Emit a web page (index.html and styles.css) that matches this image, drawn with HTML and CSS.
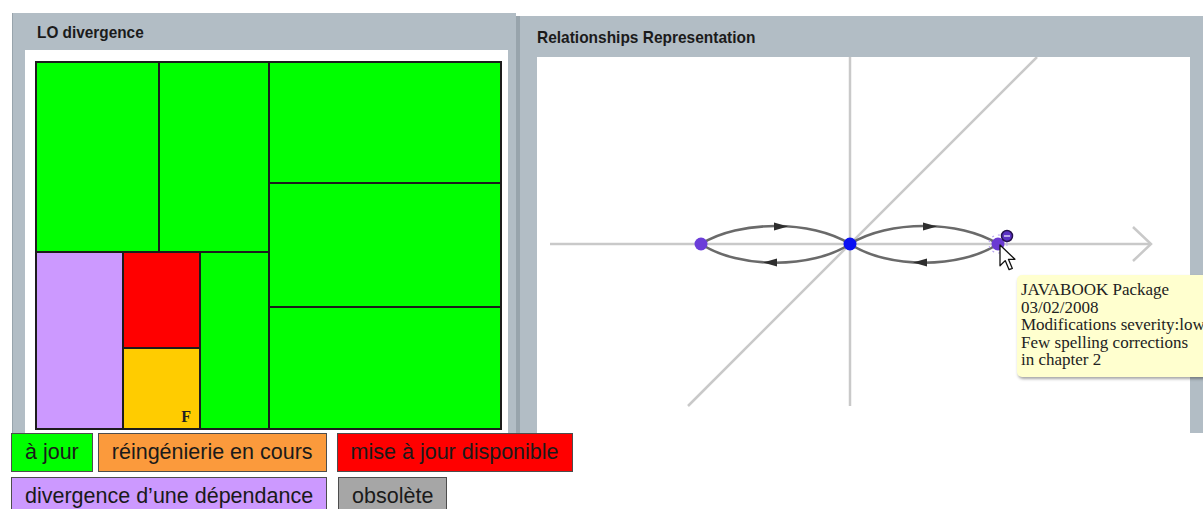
FILE: index.html
```html
<!DOCTYPE html>
<html lang="fr">

<head>
    <meta charset="UTF-8">
    <meta name="viewport" content="width=device-width, initial-scale=1.0">
    <title>LO divergence</title>
    <link rel="stylesheet" href="styles.css">
</head>

<body>
    <div class="page">
        <div class="panels">
            <!-- treemap des objets d'apprentissage -->
            <section class="panel panel-lo">
                <header class="panel-title"><span>LO divergence</span></header>
                <div class="panel-body">
                    <div class="treemap">
                        <div class="tm-left">
                            <div class="tm-row tm-top">
                                <div class="cell green cell-a"></div>
                                <div class="cell green grow"></div>
                            </div>
                            <div class="tm-row tm-bottom">
                                <div class="cell lavender cell-dep"></div>
                                <div class="tm-stack">
                                    <div class="cell red cell-maj"></div>
                                    <div class="cell amber grow"><b class="flag">F</b></div>
                                </div>
                                <div class="cell green grow"></div>
                            </div>
                        </div>
                        <div class="tm-right">
                            <div class="cell green cell-r1"></div>
                            <div class="cell green cell-r2"></div>
                            <div class="cell green grow"></div>
                        </div>
                    </div>
                </div>
            </section>

            <!-- graphe des relations -->
            <section class="panel panel-rel">
                <header class="panel-title"><span>Relationships Representation</span></header>
                <div class="canvas">
                    <svg width="653" height="376" viewBox="0 0 653 376">
                        <g stroke="#c9c9c9" stroke-width="2.5" fill="none">
                            <line x1="13" y1="187" x2="614" y2="187" />
                            <polyline points="596,170 614,187 596,204" />
                            <line x1="313" y1="0" x2="313" y2="349" />
                            <line x1="500" y1="0" x2="151" y2="349" />
                        </g>
                        <g stroke="#6a6a6a" stroke-width="2.6" fill="none">
                            <path d="M164,187 C202,163 275,163 313,187" />
                            <path d="M164,187 C202,212 275,212 313,187" />
                            <path d="M313,187 C351,163 423,163 461,187" />
                            <path d="M313,187 C351,212 423,212 461,187" />
                        </g>
                        <g fill="#2e2e2e">
                            <polygon points="237,165.5 251,169.5 237,173.5" />
                            <polygon points="240,201.5 226,205.5 240,209.5" />
                            <polygon points="386,165.5 400,169.5 386,173.5" />
                            <polygon points="390,201.5 376,205.5 390,209.5" />
                        </g>
                        <circle cx="164" cy="187" r="6.5" fill="#6b3dd9" />
                        <circle cx="313" cy="187" r="6.5" fill="#0a10f2" />
                        <circle cx="461" cy="187" r="9" fill="none" stroke="#b9a6f0" stroke-width="1.2" stroke-dasharray="2 4" />
                        <circle cx="461" cy="187" r="6.5" fill="#6a3ad2" />
                        <circle cx="470" cy="179" r="5.5" fill="#5b31c4" stroke="#26124f" stroke-width="1.5" />
                        <line x1="467" y1="179" x2="473" y2="179" stroke="#d8cdf5" stroke-width="1.5" />
                        <!-- curseur -->
                        <path transform="translate(463,188) scale(1.3)" d="M0,0 L0,16 L4,12 L7,19 L9.5,18 L6.5,11 L11.5,11 Z" fill="#fff" stroke="#111" stroke-width="1" stroke-linejoin="round" />
                    </svg>
                    <div class="tip">
                        JAVABOOK Package<br>
                        03/02/2008<br>
                        Modifications severity:low<br>
                        Few spelling corrections<br>
                        in chapter 2
                    </div>
                </div>
            </section>
        </div>

        <!-- légende -->
        <div class="legend">
            <div class="legend-row">
                <span class="tag tag-ok">à jour</span>
                <span class="tag tag-reeng">réingénierie en cours</span>
                <span class="tag tag-maj">mise à jour disponible</span>
            </div>
            <div class="legend-row">
                <span class="tag tag-dep">divergence d’une dépendance</span>
                <span class="tag tag-old">obsolète</span>
            </div>
        </div>
    </div>
</body>

</html>
```

FILE: styles.css
```css
body {
    margin: 0;
    background-color: #fff;
    font-family: "Liberation Sans", Arial, sans-serif;
    overflow: hidden;
}

.page {
    width: 1203px;
    height: 509px;
    overflow: hidden;
}

.panels {
    display: flex;
    align-items: flex-start;
    height: 420px;
    padding: 13px 0 0 12px;
}

.panel {
    display: flex;
    flex-direction: column;
    flex: none;
    box-sizing: border-box;
    background-color: #b2bdc5;
}

.panel-title {
    display: flex;
    align-items: center;
    flex: none;
    box-sizing: border-box;
    color: #1b1b1b;
    font-weight: bold;
    white-space: nowrap;
}

.panel-title span {
    display: inline-block;
    transform-origin: left center;
}

/* panneau gauche */
.panel-lo {
    width: 504px;
    height: 420px;
    padding: 0 8px 0 12px;
    border-left: 1px solid #98a4ac;
}

.panel-lo .panel-title {
    height: 37px;
    padding: 3px 0 0 12px;
    font-size: 16px;
}

.panel-lo .panel-title span {
    transform: scaleX(0.96);
}

.panel-body {
    flex: 1;
    background-color: #fff;
    padding: 11px 0 0 10px;
}

.treemap {
    display: flex;
    width: 467px;
    height: 369px;
    box-sizing: border-box;
    border: 1px solid #1c1c1c;
}

.tm-left {
    display: flex;
    flex-direction: column;
    width: 233px;
}

.tm-right {
    display: flex;
    flex-direction: column;
    flex: 1;
}

.tm-row {
    display: flex;
}

.tm-top {
    height: 190px;
}

.tm-bottom {
    flex: 1;
}

.tm-stack {
    display: flex;
    flex-direction: column;
    width: 77px;
}

.cell {
    box-sizing: border-box;
    border: 1px solid #1c1c1c;
    flex: none;
}

.cell.grow {
    flex: 1;
}

.cell-a { width: 123px; }
.cell-dep { width: 87px; }
.cell-maj { height: 96px; }
.cell-r1 { height: 121px; }
.cell-r2 { height: 124px; }

.green { background-color: #00ff00; }
.lavender { background-color: #cc99ff; }
.red { background-color: #ff0000; }

.amber {
    display: flex;
    align-items: flex-end;
    justify-content: flex-end;
    padding: 0 8px 3px 0;
    background-color: #ffcc00;
}

.flag {
    font-family: "Liberation Serif", "Times New Roman", serif;
    font-size: 16px;
    line-height: 16px;
    color: #222;
}

/* panneau droit */
.panel-rel {
    width: 687px;
    height: 417px;
    margin-top: 3px;
    padding: 0 13px 0 17px;
    border-left: 4px solid #98a4ac;
}

.panel-rel .panel-title {
    height: 41px;
    padding-top: 2px;
    font-size: 17px;
}

.panel-rel .panel-title span {
    transform: scaleX(0.91);
}

.canvas {
    position: relative;
    flex: 1;
    background-color: #fff;
}

.canvas svg {
    display: block;
}

.tip {
    position: absolute;
    left: 480px;
    top: 218px;
    width: 200px;
    height: 102px;
    box-sizing: border-box;
    padding: 6px 4px;
    background-color: #ffffcf;
    border-radius: 5px;
    box-shadow: 1px 2px 3px rgba(0, 0, 0, 0.35);
    font-family: "Liberation Serif", "Times New Roman", serif;
    font-size: 17px;
    line-height: 17.5px;
    color: #222;
    white-space: nowrap;
}

/* légende */
.legend {
    display: flex;
    flex-direction: column;
    gap: 5px;
    padding-left: 11px;
}

.legend-row {
    display: flex;
}

.tag {
    height: 39px;
    box-sizing: border-box;
    padding: 0 13px;
    border: 1px solid #4d4d4d;
    font-size: 21.5px;
    line-height: 37px;
    color: #1a1a1a;
    white-space: nowrap;
}

.tag-ok {
    margin-right: 5px;
    background-color: #00ff00;
}

.tag-reeng {
    margin-right: 10px;
    background-color: #fb9a3c;
}

.tag-maj {
    margin-right: 0;
    background-color: #ff0000;
}

.tag-dep {
    margin-right: 11px;
    background-color: #cc99ff;
}

.tag-old {
    background-color: #a6a6a6;
}
```
